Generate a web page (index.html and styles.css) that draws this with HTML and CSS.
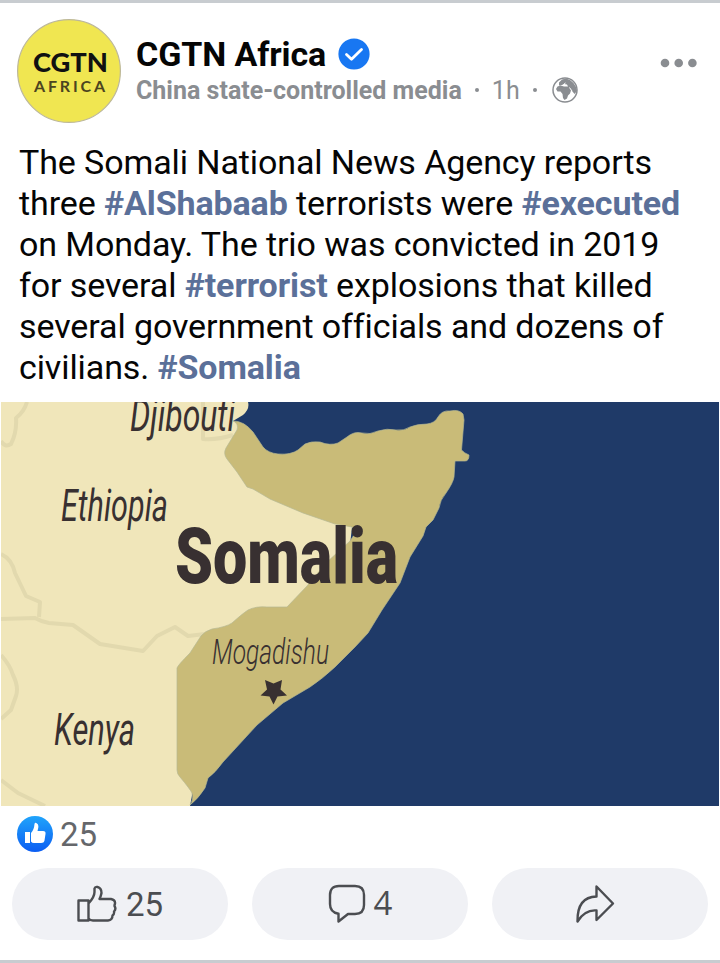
FILE: index.html
```html
<!DOCTYPE html>
<html lang="en">
<head>
    <meta charset="utf-8">
    <title>CGTN Africa</title>
    <meta name="viewport" content="width=device-width, initial-scale=1">
    <link rel="stylesheet" href="styles.css">
</head>
<body>
    <article class="post">
        <header class="post-header">
            <svg class="avatar" viewBox="0 0 104 104">
                <circle cx="52" cy="52" r="51.4" fill="#f0e651" stroke="#bdb89a" stroke-width="1.2"/>
                <text class="logo-main" x="16" y="52.500" textLength="75" lengthAdjust="spacingAndGlyphs">CGTN</text>
                <text class="logo-sub" x="17" y="72.500" textLength="71">AFRICA</text>
            </svg>
            <div class="author">
                <div class="author-row">
                    <span class="author-name">CGTN Africa</span>
                    <svg class="verified" viewBox="0 0 32 32">
                        <circle cx="16" cy="16" r="15.600" fill="#1877f2"/>
                        <path d="M8.500 16.500l5 4.800L23.500 11.500" fill="none" stroke="#fff" stroke-width="2.800" stroke-linecap="round" stroke-linejoin="round"/>
                    </svg>
                </div>
                <div class="meta">
                    <span class="meta-label">China state-controlled media</span>
                    <span class="dot"></span>
                    <span class="time">1h</span>
                    <span class="dot"></span>
                    <svg class="globe" viewBox="0 0 26 26">
                        <circle cx="13" cy="13" r="12" fill="none" stroke="#8a8d91" stroke-width="1.500"/>
                        <path fill="#8a8d91" d="M7 5.500L10 2.500L14 1.500L18 3L21.500 6L24 10L25 14L22.500 17L20.500 14.500L18.500 12.500L17 10.500L19 13.500L18 16.500L16 18.500L15 21.500L12.500 23L11 21L10.500 17L8.500 14.500L5.500 14.500L4 12L5.500 9.500L8.500 8.500L12 9.500L16 9.500L15 7.500L12 7L10 8L7 8.500Z"/>
                        <path d="M11.500 7.500l2-1.500M17.500 10.500l2.500 3.500" stroke="#fff" stroke-width="1"/>
                    </svg>
                </div>
            </div>
            <svg class="more" viewBox="0 0 38 10" fill="#8a8d91">
                <circle cx="5" cy="5" r="4.300"/>
                <circle cx="18.700" cy="5" r="4.300"/>
                <circle cx="32.400" cy="5" r="4.300"/>
            </svg>
        </header>

        <p class="post-text">
            The Somali National News Agency reports<br>
            three <b>#AlShabaab</b> terrorists were <b>#executed</b><br>
            on Monday. The trio was convicted in 2019<br>
            for several <b>#terrorist</b> explosions that killed<br>
            several government officials and dozens of<br>
            civilians. <b>#Somalia</b>
        </p>

        <svg class="map" viewBox="1 402 718 404">
            <rect x="1" y="402" width="718" height="404" fill="#1f3a68"/>
            <!-- neighbouring countries -->
            <path fill="#f0e6ba" d="M1 402H248Q250 409 243 415L233 421L245 426L260 460L352 527L350 545L300 610L215 650L195 780L190 806H1Z"/>
            <g class="borders">
                <path d="M27 402Q24 412 16 418Q17 432 11 444Q5 448 1 441"/>
                <path d="M1 554Q12 559 15 573L26 596L40 602L39 617"/>
                <path d="M1 619L35 618Q42 622 49 623L73 625L100 644L143 651L157 636L175 627L188 636L205 634"/>
                <path d="M1 655Q10 665 13 675Q19 687 16 696L11 710L1 719"/>
                <path d="M1 780L18 793L45 806"/>
                <path d="M203 402V439Q218 440 233 435"/>
            </g>
            <path fill="#c9bb78" stroke="#b5b892" stroke-width=".7" d="M233.500 421Q244 421 253 432L263 447Q268 453 278 454Q291 455 298 450L305 444Q311 441 320 442Q330 446 338 443L347 437Q354 431 362 433Q370 435 378 431Q387 428 396 430Q404 431 410 427Q417 424 427 424Q435 423 438 417Q442 410 450 411Q459 409 463 414L464 420L461.500 450Q464 453 469 455Q469 461 465 461H455L454 477Q453 483 446 493Q440 500 439 508L433 520L426 527L423 536L410 557L400 583L382 610L368 633L355 647L335 667Q322 679 310 687L283 703L257 725L223 762Q215 773 208 778L205 788Q198 799 190 805Q194 800 192 793Q190 789 180 777Q177 774 177 770V668Q178 665 190 653L201 636Q205 631 212 629Q226 627 232 623Q242 614 248 610Q256 606 267 607H287L307 586L326 563L350 541L356 532L352 527L335 524L303 513L270 499L253 489L247 487L237 472L227 459Q223 454 226 448L237 430Q239 424 233.500 421Z"/>
            <g class="labels">
                <text x="130" y="431" textLength="105" lengthAdjust="spacingAndGlyphs">Djibouti</text>
                <text x="61" y="520.500" textLength="107" lengthAdjust="spacingAndGlyphs">Ethiopia</text>
                <text x="54" y="745" textLength="81" lengthAdjust="spacingAndGlyphs">Kenya</text>
                <text class="city" x="212" y="664" textLength="117" lengthAdjust="spacingAndGlyphs">Mogadishu</text>
                <text class="country" x="175" y="582.500" textLength="223" lengthAdjust="spacingAndGlyphs">Somalia</text>
            </g>
            <path fill="#383031" d="M265 680L273.500 683.500L282 680L280.500 689.500L287 695.500L277.500 696.500L273.500 704.500L269.500 696.500L260.500 695.500L267 689.500Z"/>
        </svg>

        <div class="reactions">
            <svg class="like-badge" viewBox="0 0 36 36">
                <defs>
                    <linearGradient id="likeFill" x1="0" y1="0" x2="0" y2="1">
                        <stop offset="0" stop-color="#20a4fb"/>
                        <stop offset="1" stop-color="#0b5df2"/>
                    </linearGradient>
                </defs>
                <circle cx="18" cy="18" r="18" fill="url(#likeFill)"/>
                <path fill="#fff" d="M8 16h5v11H8zM14 17Q17 14 17.500 8Q18 6 20 7.500Q22.500 9 20.500 15H26Q29 15 28.500 18L27.500 24.500Q27 27 24 27H17Q15 27 14 25.500Z"/>
            </svg>
            <span>25</span>
        </div>

        <footer class="actions">
            <button class="action like" aria-label="Like">
                <svg width="40" height="38" viewBox="0 0 40 38">
                    <path d="M1.500 15.500h10v20h-10zM11.500 18.500Q17.500 12 17.500 7V3.500Q18 1.500 20.500 2Q24.500 3 24.500 8Q24 11 22.500 14H34Q38.500 15 38 18.500Q37.500 20 37.500 21Q39.500 24 37 26.500Q37.500 29 35.500 30.500Q35.500 35 31 35.500H16Q13 35.500 11.500 33.500"/>
                </svg>
                <span>25</span>
            </button>
            <button class="action comment" aria-label="Comment">
                <svg width="38" height="40" viewBox="0 0 38 40">
                    <path d="M11 2H27Q36 2 36 11V21Q36 30 27 30H20L10.500 37.500V29.700Q2 28.500 2 20V11Q2 2 11 2Z"/>
                </svg>
                <span>4</span>
            </button>
            <button class="action share" aria-label="Share">
                <svg width="40" height="40" viewBox="0 0 40 40">
                    <path d="M21.500 2.500L38 19.500L21.500 36V26.500Q10 25.500 2.500 37.500Q2 13 21.500 12.500Z"/>
                </svg>
            </button>
        </footer>
    </article>
</body>
</html>
```
FILE: styles.css
```css
body {
    margin: 0;
    font-family: Roboto, sans-serif;
    background-color: #fff;
    color: #050505;
}
.post {
    box-sizing: border-box;
    width: 720px;
    height: 963px;
    border-top: 3px solid #c8ccd0;
    border-bottom: 3px solid #c8ccd0;
    overflow: hidden;
}
.post-header {
    display: flex;
    height: 104px;
    padding: 16px 22px 0 17px;
}
.avatar {
    width: 104px;
    height: 104px;
}
.logo-main {
    font: 900 26px Lato, sans-serif;
    fill: #111;
}
.logo-sub {
    font: 700 16px Lato, sans-serif;
    fill: #4b4420;
}
.author {
    flex: 1;
    padding: 15px 0 0 15px;
}
.author-row {
    display: flex;
    align-items: center;
    height: 40px;
}
.author-name {
    font-size: 34px;
    font-weight: 700;
    letter-spacing: -0.1px;
}
.verified {
    width: 32px;
    height: 32px;
    margin-left: 12px;
}
.meta {
    display: flex;
    align-items: center;
    height: 32px;
    font-size: 25px;
    color: #8a8d91;
}
.meta-label {
    font-weight: 700;
}
.dot {
    width: 4px;
    height: 4px;
    margin: 0 13px;
    border-radius: 50%;
    background-color: #8a8d91;
}
.globe {
    width: 26px;
    height: 26px;
    margin-left: 2px;
}
.more {
    width: 38px;
    height: 10px;
    margin-top: 39px;
}
.post-text {
    height: 246px;
    margin: 19px 0 14px 19px;
    font-size: 34px;
    line-height: 41px;
    letter-spacing: -0.1px;
    white-space: nowrap;
}
.post-text b {
    color: #5b7099;
}
.map {
    display: block;
    width: 718px;
    height: 404px;
    margin: 0 1px;
}
.borders {
    fill: none;
    stroke: #e2d9ae;
    stroke-width: 4;
    stroke-linejoin: round;
}
.labels {
    font-size: 44px;
    font-style: italic;
    font-weight: 400;
    fill: #383031;
}
.labels .city {
    font-size: 35px;
    font-weight: 300;
}
.labels .country {
    font-size: 77px;
    font-style: normal;
    font-weight: 900;
}
.reactions {
    display: flex;
    align-items: center;
    gap: 7px;
    height: 36px;
    padding: 10px 17px 16px;
    font-size: 33px;
    color: #65676b;
}
.like-badge {
    width: 36px;
    height: 36px;
}
.actions {
    display: grid;
    grid-template-columns: repeat(3, 216px);
    gap: 24px;
    padding: 0 12px;
}
.action {
    display: flex;
    align-items: center;
    justify-content: center;
    height: 72px;
    padding: 0;
    border: none;
    border-radius: 36px;
    background-color: #f0f1f5;
    font-family: inherit;
    font-size: 33px;
    color: #4b4d51;
}
.action svg {
    fill: none;
    stroke: #4b4d51;
    stroke-width: 2.4;
    stroke-linejoin: round;
}
.like {
    gap: 9px;
}
.comment {
    gap: 8px;
}
.comment span {
    margin-top: -3px;
    font-family: "Open Sans", sans-serif;
}
.share {
    padding-right: 10px;
}
```
